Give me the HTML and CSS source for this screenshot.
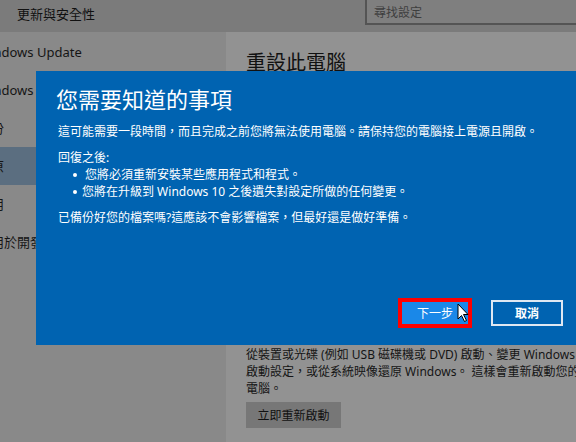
FILE: index.html
```html
<!DOCTYPE html>
<html>
    <head>
        <title>設定</title>
        <meta charset="utf-8"/>
        <link rel="stylesheet" href="styles.css">
    </head>
    <body class="body">
        <header class="topbar">
            <h1 class="page_title">更新與安全性</h1>
            <div class="search_box">尋找設定</div>
        </header>
        <div class="frame">
            <nav class="sidebar">
                <div class="side_item">Windows Update</div>
                <div class="side_item">Windows Defender</div>
                <div class="side_item">備份</div>
                <div class="side_item selected">復原</div>
                <div class="side_item">啟用</div>
                <div class="side_item">適用於開發人員</div>
            </nav>
            <main class="content">
                <h2 class="content_title">重設此電腦</h2>
                <div class="hidden_part"></div>
                <p class="desc">從裝置或光碟 (例如 USB 磁碟機或 DVD) 啟動、變更 Windows 啟動設定，或從系統映像還原 Windows。 這樣會重新啟動您的電腦。</p>
                <button class="gray_btn">立即重新啟動</button>
            </main>
        </div>

        <!-- 對話框 -->
        <div class="dialog">
            <h2 class="dialog_title">您需要知道的事項</h2>
            <p class="dlg_text">這可能需要一段時間，而且完成之前您將無法使用電腦。請保持您的電腦接上電源且開啟。</p>
            <p class="dlg_text gap">回復之後:</p>
            <ul class="dlg_list">
                <li>&nbsp;您將必須重新安裝某些應用程式和程式。</li>
                <li>您將在升級到 Windows 10 之後遺失對設定所做的任何變更。</li>
            </ul>
            <p class="dlg_text gap">已備份好您的檔案嗎?這應該不會影響檔案，但最好還是做好準備。</p>
            <div class="btn_row">
                <div class="red_box">
                    <button class="next_btn">下一步</button>
                </div>
                <button class="cancel_btn">取消</button>
            </div>
            <svg class="cursor" width="13" height="20" viewBox="0 0 13 20">
                <path d="M1 1 L1 16 L4.5 12.5 L7.5 18.5 L9.5 17.5 L6.5 11.5 L11 11.5 Z" fill="#fff" stroke="#000" stroke-width="1"/>
            </svg>
        </div>
    </body>
</html>
```

FILE: styles.css
```css
.body{
    margin:0px;
    width:576px;
    height:442px;
    overflow:hidden;
    position:relative;
    background-color:#929292;
    font-family:"Noto Sans","Noto Sans CJK TC",sans-serif;
    color:#151515;
}
.topbar{
    height:32px;
    background-color:#7b7b7b;
    display:flex;
    justify-content:space-between;
}
.page_title{
    margin:0px;
    padding-left:17px;
    font-size:13px;
    font-weight:normal;
    line-height:28px;
    color:#111;
}
.search_box{
    width:213px;
    height:23px;
    margin-left:auto;
    margin-right:-13px;
    border:2px solid #545454;
    border-top:none;
    background-color:#7f7f7f;
    font-size:12px;
    line-height:25px;
    padding-left:7px;
    color:#3e3e3e;
}
.frame{
    display:flex;
    height:410px;
}
.sidebar{
    width:226px;
    flex:none;
    background-color:#898989;
    padding-top:1px;
    overflow:hidden;
}
.side_item{
    height:38px;
    line-height:38px;
    font-size:13px;
    margin-left:-22px;
    padding-left:0px;
    white-space:nowrap;
    color:#151515;
}
.side_item.selected{
    margin-left:0px;
    padding-left:0px;
    text-indent:-22px;
    background-color:#5b6e80;
}
.content{
    flex:none;
    width:338px;
    padding-left:20px;
}
.content_title{
    margin:0px;
    margin-top:17px;
    font-size:20px;
    font-weight:normal;
    line-height:28px;
    color:#111;
}
.hidden_part{
    height:269px;
}
.desc{
    margin:0px;
    font-size:12px;
    line-height:17px;
}
.gray_btn{
    margin-top:5px;
    width:95px;
    height:26px;
    border:none;
    background-color:#777;
    font-family:"Noto Sans","Noto Sans CJK TC",sans-serif;
    font-size:12px;
    color:#111;
    padding:0px;
}
.dialog{
    position:absolute;
    left:36px;
    right:0px;
    top:71px;
    height:274px;
    box-sizing:border-box;
    background-color:#0063b1;
    color:#fff;
    padding:14px 13px 17px 20px;
    display:flex;
    flex-direction:column;
}
.dialog_title{
    margin:0px;
    font-size:22px;
    font-weight:normal;
    line-height:28px;
}
.dlg_text{
    margin:0px;
    margin-top:10px;
    padding-left:2px;
    font-size:12px;
    line-height:17px;
}
.dlg_text.gap{
    margin-top:9px;
}
.dlg_list{
    margin:0px;
    padding:0px;
    padding-left:26px;
    list-style:none;
    font-size:12px;
    line-height:17px;
}
.dlg_list li{
    position:relative;
}
.dlg_list li::before{
    content:'';
    position:absolute;
    left:-9px;
    top:7px;
    width:4px;
    height:4px;
    border-radius:2px;
    background-color:#fff;
}
.btn_row{
    margin-top:auto;
    display:flex;
    justify-content:flex-end;
    align-items:center;
    gap:19px;
}
.red_box{
    border:4px solid #ff0000;
    display:flex;
}
.next_btn{
    width:66px;
    height:22px;
    border:none;
    padding:0px;
    background-color:#1a88e8;
    color:#fff;
    font-family:"Noto Sans","Noto Sans CJK TC",sans-serif;
    font-size:12px;
}
.cancel_btn{
    width:72px;
    height:26px;
    box-sizing:border-box;
    border:2px solid #dfe8f2;
    padding:0px;
    background-color:#0063b1;
    color:#fff;
    font-family:"Noto Sans","Noto Sans CJK TC",sans-serif;
    font-size:12px;
    font-weight:bold;
}
.cursor{
    position:absolute;
    left:421px;
    top:232px;
}
```
